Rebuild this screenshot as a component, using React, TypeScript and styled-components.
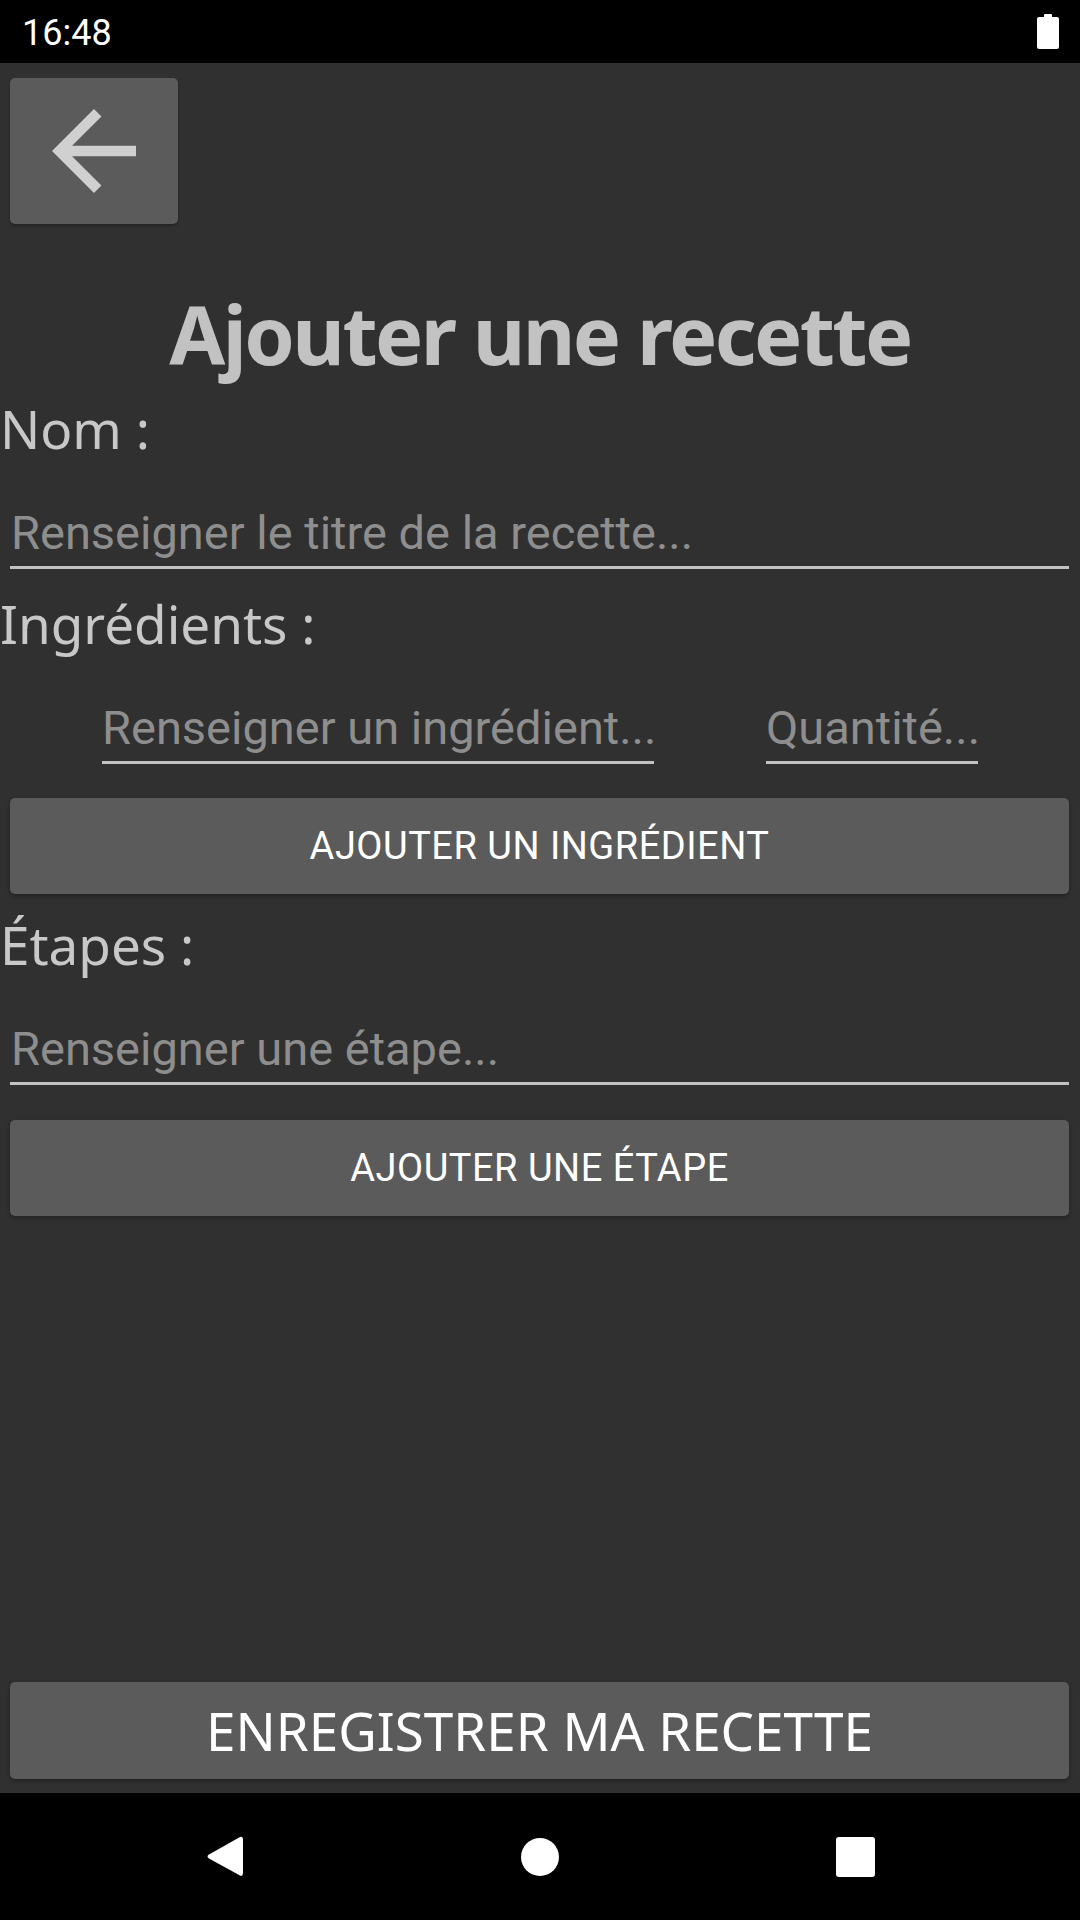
import React from 'react'
import styled, { createGlobalStyle } from 'styled-components'

const GlobalStyle = createGlobalStyle`
  html, body {
    margin: 0;
    padding: 0;
    background: #000;
  }
  * {
    box-sizing: border-box;
  }
`

const Screen = styled.div`
  width: 1080px;
  height: 1920px;
  display: flex;
  flex-direction: column;
  background: #000;
  overflow: hidden;
`

const StatusBar = styled.div`
  height: 63px;
  flex-shrink: 0;
  display: flex;
  align-items: center;
  justify-content: space-between;
  padding: 0 21px 0 22px;
  background: #000;
  color: #fff;
  font-family: Roboto, sans-serif;
  font-size: 36px;
`

const Clock = styled.span`
  line-height: 1;
  margin-top: 2px;
`

const Main = styled.div`
  flex: 1;
  display: flex;
  flex-direction: column;
  background: #303030;
  font-family: 'Noto Sans', sans-serif;
`

const BackButton = styled.button`
  width: 168px;
  height: 146px;
  margin: 15px 0 0 10px;
  padding: 0;
  border: none;
  border-radius: 5px;
  background: #5b5b5c;
  display: flex;
  align-items: center;
  justify-content: center;
  box-shadow: 0 2px 3px rgba(0, 0, 0, 0.25);
`

const Title = styled.h1`
  margin: 60px 0 0;
  text-align: center;
  color: #c2c2c2;
  font-size: 81px;
  font-weight: 700;
  letter-spacing: -2.6px;
  line-height: 100px;
`

const Label = styled.div<{ $gap: number }>`
  margin-top: ${p => p.$gap}px;
  color: #c8c8c8;
  font-size: 53px;
  line-height: 72px;
  white-space: nowrap;
`

const Field = styled.input<{ $width?: number }>`
  display: block;
  width: ${p => (p.$width ? `${p.$width}px` : 'auto')};
  margin: 0;
  padding: 0 0 4px 0;
  border: none;
  border-bottom: 3px solid #c2c2c2;
  background: transparent;
  color: #e0e0e0;
  font-family: Roboto, sans-serif;
  font-size: 47px;
  line-height: 60px;
  height: 67px;
  outline: none;

  &::placeholder {
    color: #8e8e8e;
    opacity: 1;
  }
`

const FullField = styled(Field)`
  margin: 37px 11px 0 10px;
  padding-left: 1px;
`

const IngredientRow = styled.div`
  margin-top: 37px;
  display: flex;
  justify-content: center;
  gap: 112px;
`

const ActionButton = styled.button<{ $big?: boolean }>`
  display: flex;
  align-items: center;
  justify-content: center;
  height: ${p => (p.$big ? 97 : 96)}px;
  margin: 0 11px 0 10px;
  padding: 0;
  border: none;
  border-radius: 5px;
  background: #5b5b5c;
  color: #fff;
  font-family: ${p => (p.$big ? "'Noto Sans', sans-serif" : 'Roboto, sans-serif')};
  font-size: ${p => (p.$big ? 53 : 38)}px;
  letter-spacing: ${p => (p.$big ? 0 : 0.5)}px;
  text-transform: uppercase;
  box-shadow: 0 2px 4px rgba(0, 0, 0, 0.3);
`

const SmallAction = styled(ActionButton)<{ $top: number }>`
  margin-top: ${p => p.$top}px;
`

const SaveButton = styled(ActionButton)`
  margin-top: auto;
  margin-bottom: 14px;
`

const NavBar = styled.div`
  height: 127px;
  flex-shrink: 0;
  display: flex;
  align-items: center;
  justify-content: center;
  background: #000;
`

const NavSlot = styled.div`
  width: 315px;
  display: flex;
  align-items: center;
  justify-content: center;
`

const HomeDot = styled.div`
  width: 38px;
  height: 38px;
  border-radius: 50%;
  background: #fff;
`

const RecentsSquare = styled.div`
  width: 39px;
  height: 40px;
  border-radius: 3px;
  background: #fff;
`

const BatteryIcon = () => (
  <svg width="22" height="35" viewBox="0 0 22 35">
    <rect x="7" y="0" width="8" height="4" rx="1" fill="#fff" />
    <rect x="0" y="3" width="22" height="32" rx="2" fill="#fff" />
  </svg>
)

const ArrowBack = () => (
  <svg width="126" height="126" viewBox="0 0 24 24">
    <path
      d="M20 11H7.83l5.59-5.59L12 4l-8 8 8 8 1.41-1.41L7.83 13H20v-2z"
      fill="#d0d0d0"
    />
  </svg>
)

const NavBack = () => (
  <svg width="38" height="43" viewBox="0 0 38 43">
    <path
      d="M34 2 Q37 1 37 5 L37 38 Q37 42 34 40.5 L3 23.5 Q0 21.5 3 19.5 Z"
      fill="#fff"
    />
  </svg>
)

const App = () => (
  <>
    <GlobalStyle />
    <Screen>
      <StatusBar>
        <Clock>16:48</Clock>
        <BatteryIcon />
      </StatusBar>
      <Main>
        <BackButton aria-label="Retour">
          <ArrowBack />
        </BackButton>
        <Title>Ajouter une recette</Title>
        <Label $gap={9}>Nom :</Label>
        <FullField placeholder="Renseigner le titre de la recette..." />
        <Label $gap={19}>Ingrédients :</Label>
        <IngredientRow>
          <Field $width={552} placeholder="Renseigner un ingrédient..." />
          <Field $width={212} placeholder="Quantité..." />
        </IngredientRow>
        <SmallAction $top={34}>Ajouter un ingrédient</SmallAction>
        <Label $gap={15}>Étapes :</Label>
        <FullField placeholder="Renseigner une étape..." />
        <SmallAction $top={35}>Ajouter une étape</SmallAction>
        <SaveButton $big>Enregistrer ma recette</SaveButton>
      </Main>
      <NavBar>
        <NavSlot>
          <NavBack />
        </NavSlot>
        <NavSlot>
          <HomeDot />
        </NavSlot>
        <NavSlot>
          <RecentsSquare />
        </NavSlot>
      </NavBar>
    </Screen>
  </>
)

export default App
